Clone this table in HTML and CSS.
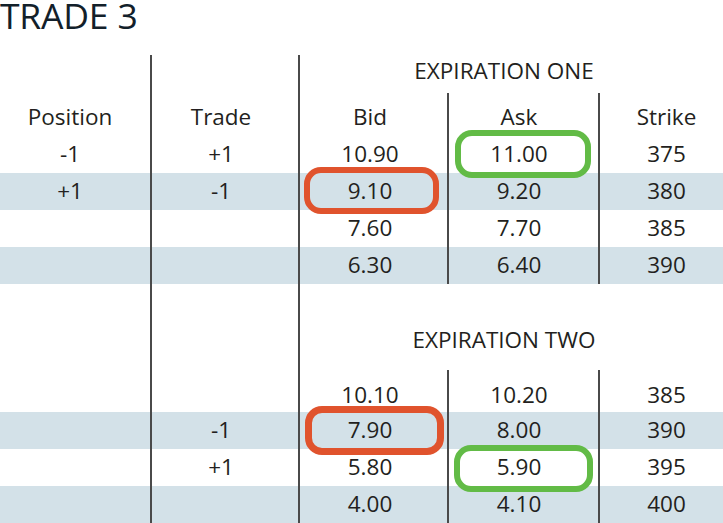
FILE: index.html
```html
<!DOCTYPE html>
<html lang="en">
<head>
<meta charset="utf-8">
<title>Trade 3</title>
<link rel="stylesheet" href="styles.css">
</head>
<body>
<h1 class="title">TRADE 3</h1>
<div class="table">
  <div class="row label">
    <div class="cell c1"></div><div class="cell c2"></div><div class="cell span">EXPIRATION ONE</div>
  </div>
  <div class="row data head">
    <div class="cell c1 hc">Position</div><div class="cell c2">Trade</div><div class="cell c3">Bid</div><div class="cell c4">Ask</div><div class="cell c5">Strike</div>
  </div>
  <div class="row data">
    <div class="cell c1">-1</div><div class="cell c2">+1</div><div class="cell c3">10.90</div><div class="cell c4">11.00<span class="hl green"></span></div><div class="cell c5">375</div>
  </div>
  <div class="row data stripe">
    <div class="cell c1">+1</div><div class="cell c2">-1</div><div class="cell c3">9.10<span class="hl red"></span></div><div class="cell c4">9.20</div><div class="cell c5">380</div>
  </div>
  <div class="row data">
    <div class="cell c1"></div><div class="cell c2"></div><div class="cell c3">7.60</div><div class="cell c4">7.70</div><div class="cell c5">385</div>
  </div>
  <div class="row data stripe">
    <div class="cell c1"></div><div class="cell c2"></div><div class="cell c3">6.30</div><div class="cell c4">6.40</div><div class="cell c5">390</div>
  </div>
  <div class="row label two">
    <div class="cell c1"></div><div class="cell c2"></div><div class="cell span">EXPIRATION TWO</div>
  </div>
  <div class="row data lead">
    <div class="cell c1"></div><div class="cell c2"></div><div class="cell c3">10.10</div><div class="cell c4">10.20</div><div class="cell c5">385</div>
  </div>
  <div class="row data stripe">
    <div class="cell c1"></div><div class="cell c2">-1</div><div class="cell c3">7.90<span class="hl red low"></span></div><div class="cell c4">8.00</div><div class="cell c5">390</div>
  </div>
  <div class="row data">
    <div class="cell c1"></div><div class="cell c2">+1</div><div class="cell c3">5.80</div><div class="cell c4">5.90<span class="hl green low"></span></div><div class="cell c5">395</div>
  </div>
  <div class="row data stripe">
    <div class="cell c1"></div><div class="cell c2"></div><div class="cell c3">4.00</div><div class="cell c4">4.10</div><div class="cell c5">400</div>
  </div>
</div>
</body>
</html>
```
FILE: styles.css
```css
* { box-sizing: border-box; }

html, body {
  margin: 0;
  padding: 0;
  background: #ffffff;
  overflow: hidden;
}

body {
  font-family: "Open Sans", "Liberation Sans", sans-serif;
  color: #231f20;
}

.title {
  margin: 0;
  height: 55px;
  font-size: 35.5px;
  line-height: 28px;
  padding-top: 1px;
  font-weight: 500;
  letter-spacing: -0.2px;
  color: #12202a;
}

.row {
  display: grid;
  grid-template-columns: 150px 148px 149px 151px 125px;
}

.cell {
  position: relative;
  display: flex;
  align-items: center;
  justify-content: center;
  font-size: 22.5px;
  white-space: nowrap;
}

.c2, .c3, .span { border-left: 2px solid #4a4a4a; }
.data .c4, .data .c5 { border-left: 2px solid #4a4a4a; }

.c1 { padding-right: 10px; }
.c2 { padding-right: 8px; }
.c3 { padding-right: 7px; }
.c4 { padding-right: 9px; }
.c5 { padding-left: 10px; }

.span {
  grid-column: 3 / 6;
  padding-right: 15px;
}

.label { height: 38px; }
.label .cell { align-items: flex-end; padding-bottom: 10px; }
.label.two { height: 86px; }
.label.two .cell { padding-bottom: 15px; }

.data { height: 37px; }
.data .cell { padding-bottom: 3px; }
.data.head { height: 43px; }
.data.head .cell { padding-top: 6px; }
.data.lead { height: 42px; }
.data.lead .cell { padding-top: 8px; padding-bottom: 2px; }

.stripe { background: #d3e1e8; }

.hl {
  position: absolute;
  border: 6px solid;
  border-radius: 17px;
}

.hl.red {
  border-color: #e0532d;
  left: 4px;
  right: 8px;
  top: -6px;
  bottom: -4px;
}

.hl.green {
  border-color: #62bb46;
  left: 6px;
  right: 7px;
  top: -6px;
  bottom: -5px;
}

.hl.red.low {
  border-width: 7px;
  left: 5px;
  right: 3px;
  top: -6px;
  bottom: -6px;
}

.hl.green.low {
  left: 5px;
  right: 5px;
  top: -4px;
  bottom: -6px;
}
```
